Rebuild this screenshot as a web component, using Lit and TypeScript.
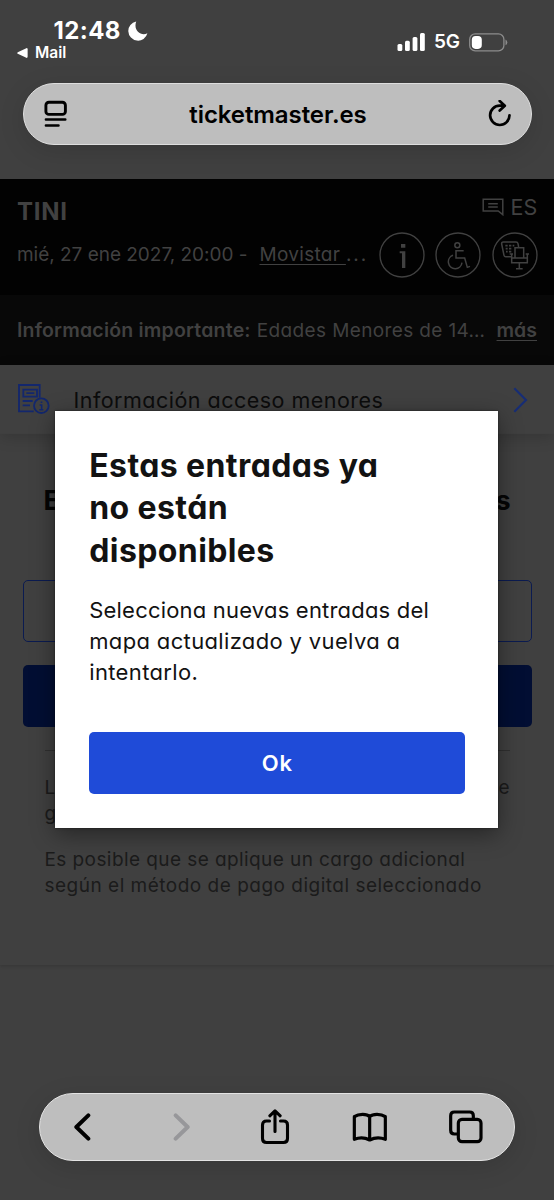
import { LitElement, html, css } from "lit";
import { customElement } from "lit/decorators.js";

@customElement("browser-top")
class BrowserTop extends LitElement {
  static styles = css`
    :host { display: block; height: 179px; box-sizing: border-box; background: #404040; color: #fff;
      font-family: Inter, "Liberation Sans", sans-serif; }
    .status { display: flex; justify-content: space-between; height: 83px; box-sizing: border-box; padding: 17px 46px 0 17px; }
    .left { display: flex; flex-direction: column; }
    .clock { display: flex; align-items: center; gap: 7px; padding-left: 36.500px; height: 28px; }
    .time { font-size: 24px; font-weight: 700; line-height: 28px; letter-spacing: 0.400px; }
    .back { display: flex; align-items: center; gap: 7px; height: 14px; padding-top: 1px; font-size: 15.500px; font-weight: 600; line-height: 14px; }
    .right { display: flex; align-items: center; height: 22px; padding-top: 14px; gap: 9px; }
    .net { font-size: 19px; font-weight: 600; letter-spacing: -0.1px; line-height: 22px; }
    .address { display: flex; align-items: center; justify-content: space-between; height: 62px; margin: 0 22.5px;
      box-sizing: border-box; padding: 0 18px 0 20px; border: 1px solid #dedede; border-radius: 31px;
      background: #bebebe; color: #000; box-shadow: 0 6px 26px rgba(0, 0, 0, 0.13); }
    .domain { font-size: 24px; font-weight: 600; letter-spacing: -0.08px; line-height: 30px; padding-top: 2px; }
    svg { display: block; flex: none; }
  `;
  render() {
    return html`
      <div class="status">
        <div class="left">
          <div class="clock">
            <span class="time">12:48</span>
            <svg width="20" height="20" viewBox="0 0 20 20"><path fill="#fff" d="M8.2.4A9.7 9.7 0 1 0 19.4 12.3C13 15.500 5 9.500 8.200.400z"/></svg>
          </div>
          <div class="back">
            <svg width="11" height="10" viewBox="0 0 11 10"><path fill="#fff" d="M.8 4.200 9.300.200Q10.600-.200 10.600 1.200V8.800Q10.600 10.200 9.300 9.800L.8 5.800Q-.4 5 .8 4.200z"/></svg>
            <span>Mail</span>
          </div>
        </div>
        <div class="right">
          <svg width="28" height="18" viewBox="0 0 28 18" fill="#fff">
            <rect x="0.500" y="11" width="4.800" height="7" rx="1.500"/><rect x="8" y="7.700" width="4.800" height="10.300" rx="1.500"/>
            <rect x="15.600" y="4" width="4.800" height="14" rx="1.500"/><rect x="23" y="0" width="4.800" height="18" rx="1.500"/>
          </svg>
          <span class="net">5G</span>
          <svg width="39" height="19" viewBox="0 0 39 19">
            <rect x="0.700" y="0.900" width="34.200" height="17" rx="5.500" fill="none" stroke="#8c8c8c" stroke-width="1.300"/>
            <rect x="2.800" y="2.900" width="10" height="13" rx="3.800" fill="#fff"/>
            <path d="M36.500 6.600Q38.300 7.600 38.300 9.400T36.500 12.300z" fill="#8c8c8c"/>
          </svg>
        </div>
      </div>
      <div class="address">
        <svg width="24" height="28" viewBox="0 0 24 28" fill="none" stroke="#000" stroke-linecap="round">
          <rect x="1.900" y="2.200" width="19.500" height="12.200" rx="3" stroke-width="2.900"/>
          <path d="M1.900 19.600H21.300M1.900 25.500H14.500" stroke-width="2.500"/>
        </svg>
        <span class="domain">ticketmaster.es</span>
        <svg width="24" height="28" viewBox="0 0 24 28" fill="none" stroke="#000" stroke-width="2.700" stroke-linecap="round" stroke-linejoin="round">
          <path d="M21.500 15.300A9.700 9.700 0 1 1 11.800 5.600H16M11.700 1 16.800 5.800 11.700 10.600"/>
        </svg>
      </div>`;
  }
}

@customElement("event-header")
class EventHeader extends LitElement {
  static styles = css`
    :host { display: block; color: #414141; font-family: Inter, "Liberation Sans", sans-serif; font-feature-settings: "cv11";
      font-size: 19px; font-weight: 400; }
    .event { height: 116px; box-sizing: border-box; padding: 16px 16.500px 0 17px; background: #020202; }
    .row { display: flex; align-items: center; justify-content: space-between; white-space: nowrap; }
    .first { height: 32px; }
    .title { font-size: 24px; font-weight: 700; letter-spacing: 0.7px; }
    .lang { display: flex; align-items: center; gap: 6px; font-size: 21.500px; letter-spacing: 0.2px; margin-top: -9px; }
    .second { height: 56px; }
    .date { letter-spacing: -0.02px; padding-bottom: 2px; }
    .place { margin-left: 12px; flex: 1; letter-spacing: 0.3px; padding-bottom: 2px; }
    .dots { letter-spacing: 2px; }
    .link { text-decoration: underline; text-underline-offset: 3px; white-space: pre; }
    .icons { display: flex; gap: 10.500px; }
    .notice { display: flex; align-items: center; height: 70px; box-sizing: border-box; padding: 0 17px; background: #080808; white-space: nowrap; }
    .strong { font-size: 19.500px; font-weight: 600; letter-spacing: 0.2px; }
    .body { margin-left: 6px; flex: 1; letter-spacing: 0.37px; }
    .more { font-size: 19.500px; font-weight: 600; text-decoration: underline; text-underline-offset: 3px; }
    svg { display: block; flex: none; }
  `;
  render() {
    return html`
      <div class="event">
        <div class="row first">
          <span class="title">TINI</span>
          <span class="lang">
            <svg width="22" height="18" viewBox="482.500 196.500 22 18" fill="none" stroke="#414141" stroke-width="1.500">
              <path d="M483.700 197.700H503.300V213.200L498.700 209.500H483.700zM488.700 202.300H498.300M488.700 205.600H498.300"/>
            </svg>
            <span>ES</span>
          </span>
        </div>
        <div class="row second">
          <span class="date">mié, 27 ene 2027, 20:00 -</span>
          <span class="place"><span class="link">Movistar </span><span class="dots">...</span></span>
          <span class="icons">
            <svg width="46" height="46" viewBox="305 170 138 138" fill="none" stroke="#414141">
              <circle cx="374" cy="239" r="66" stroke-width="4"/>
              <path d="M371 206h13v11h-13zM367 228h17v50h-10v-44h-7z" fill="#414141" stroke="none"/>
            </svg>
            <svg width="46" height="46" viewBox="474 170 138 138" fill="none" stroke="#414141" stroke-width="4.500">
              <circle cx="543" cy="239" r="66" stroke-width="4"/>
              <circle cx="541" cy="210" r="7.500"/>
              <path d="M560 226H537V248H563L571 276L579 273M528 240A20.500 20.500 0 1 0 555 262"/>
            </svg>
            <svg width="46" height="46" viewBox="644 170 138 138" fill="none" stroke="#414141" stroke-width="4.500">
              <circle cx="713" cy="239" r="66" stroke-width="4"/>
              <path d="M703 244H685Q681 244 680 240L673 206Q672 200 678 200H716Q721 200 722 205L724 215"/>
              <path d="M684 211h7M695 211h7M706 211h5M685 220h6M695 220h7M686 229h5M695 229h7" stroke-width="5"/>
              <path d="M713 247V217H739V247M703 236V262H750V236M697 236H707M745 236H755M703 248H750M726 262V280M716 280H736"/>
            </svg>
          </span>
        </div>
      </div>
      <div class="notice">
        <span class="strong">Información importante:</span>
        <span class="body">Edades Menores de 14…</span>
        <span class="more">más</span>
      </div>`;
  }
}

@customElement("checkout-page")
class CheckoutPage extends LitElement {
  static styles = css`
    :host { display: block; background: #404040; font-family: Inter, "Liberation Sans", sans-serif; font-feature-settings: "cv11"; }
    .access { display: flex; align-items: center; height: 69px; padding: 0 26.500px 0 18px; box-sizing: border-box;
      box-shadow: 0 4px 14px rgba(0, 0, 0, 0.16); color: #0c0c0c; }
    .label { flex: 1; margin-left: 23.500px; font-size: 21.500px; font-weight: 400; letter-spacing: 0.48px; white-space: nowrap; }
    .card { height: 531px; box-sizing: border-box; padding: 47px 22.500px 0; box-shadow: 0 2px 3px rgba(0, 0, 0, 0.13); }
    .ends { display: flex; justify-content: space-between; padding: 0 22px; }
    .heading { font-size: 27px; line-height: 40px; font-weight: 700; color: #050505; padding: 0 21px; }
    .btn { height: 62px; box-sizing: border-box; border-radius: 5px; }
    .outline { border: 1.500px solid #0b1b50; margin-top: 59px; }
    .solid { background: #020e33; margin-top: 23px; }
    .rule { height: 1px; background: #303030; margin: 23px 22px 24px; }
    .text { font-size: 19px; line-height: 25.500px; font-weight: 400; color: #1b1b1b; }
    .para { padding: 0 22px; margin-top: 21px; white-space: nowrap; letter-spacing: 0.42px; }
    .line { display: block; }
    .wide { letter-spacing: 0.5px; }
    svg { display: block; flex: none; }
  `;
  render() {
    return html`
      <div class="access">
        <svg width="32" height="32" viewBox="54 105 96 96" fill="none" stroke="#13276d" stroke-width="5.500">
          <path d="M101 187H57V108H119V146M70 122H111V143H70zM79 132.500H103M68 156H98M68 169H90"/>
          <circle cx="124" cy="170" r="22"/>
          <path d="M119 168H125V182M118 182H130M122 160H127" stroke-width="4.500"/>
        </svg>
        <span class="label">Información acceso menores</span>
        <svg width="15" height="26" viewBox="0 0 15 26" fill="none" stroke="#172d75" stroke-width="2.200"><path d="M1.300 1.300 13 13 1.300 24.700"/></svg>
      </div>
      <div class="card">
        <div class="ends heading"><span>E</span><span>s</span></div>
        <div class="btn outline"></div>
        <div class="btn solid"></div>
        <div class="rule"></div>
        <div class="ends text"><span>L</span><span>e</span></div>
        <div class="ends text"><span>g</span></div>
        <div class="text para">
          <span class="line">Es posible que se aplique un cargo adicional</span>
          <span class="line wide">según el método de pago digital seleccionado</span>
        </div>
      </div>`;
  }
}

@customElement("notice-dialog")
class NoticeDialog extends LitElement {
  static styles = css`
    :host { display: block; width: 443px; height: 417px; box-sizing: border-box; padding: 34px 34px 0; background: #fff; color: #121212;
      box-shadow: 0 6px 22px rgba(0, 0, 0, 0.42), 0 0 2px rgba(0, 0, 0, 0.5);
      font-family: Inter, "Liberation Sans", sans-serif; font-feature-settings: "cv11"; }
    .title { margin: 0; font-size: 32px; line-height: 42.500px; font-weight: 650; letter-spacing: 0.4px; white-space: nowrap; }
    .copy { margin: 23px 0 0; font-size: 22px; line-height: 31px; font-weight: 400; letter-spacing: 0.2px; white-space: nowrap; }
    .line { display: block; }
    .wide { letter-spacing: 0.35px; }
    .ok { display: block; width: 376px; height: 62px; margin-top: 43.500px; border: 0; border-radius: 5px; background: #1f4bd8; color: #fff;
      font: 600 22px/62px Inter, "Liberation Sans", sans-serif; letter-spacing: 0.8px; padding: 0; }
  `;
  render() {
    return html`
      <h1 class="title"><span class="line">Estas entradas ya</span><span class="line">no están</span><span class="line">disponibles</span></h1>
      <p class="copy"><span class="line">Selecciona nuevas entradas del</span><span class="line wide">mapa actualizado y vuelva a</span><span class="line wide">intentarlo.</span></p>
      <button class="ok">Ok</button>`;
  }
}

@customElement("browser-toolbar")
class BrowserToolbar extends LitElement {
  static styles = css`
    :host { display: flex; align-items: center; height: 68px; box-sizing: border-box; margin: 0 39px;
      padding: 0 0 0 34px; border: 1px solid #e4e4e4; border-radius: 34px; background: #bebebe; box-shadow: 0 6px 26px rgba(0, 0, 0, 0.13); }
    svg { display: block; flex: none; }
    .forward { margin-left: 82px; }
    .share { margin-left: 70px; }
    .book { margin-left: 62px; }
    .tabs { margin-left: 61px; }
  `;
  render() {
    return html`
      <svg width="17" height="28" viewBox="222 128 51 84" fill="none" stroke="#000" stroke-width="12" stroke-linecap="round" stroke-linejoin="round"><path d="M265 135 229 170 265 205"/></svg>
      <svg class="forward" width="17" height="28" viewBox="520 128 51 84" fill="none" stroke="#97979a" stroke-width="12" stroke-linecap="round" stroke-linejoin="round"><path d="M528 135 564 170 528 205"/></svg>
      <svg class="share" width="30" height="38" viewBox="0 0 30 38" fill="none" stroke="#000" stroke-width="3.100" stroke-linecap="round" stroke-linejoin="round">
        <path d="M9.500 13H6.500Q2.500 13 2.500 17V30.500Q2.500 34.500 6.500 34.500H23.500Q27.500 34.500 27.500 30.500V17Q27.500 13 23.500 13H20.500M15 23.500V3M9.800 7.800 15 2.800 20.200 7.800"/>
      </svg>
      <svg class="book" width="36" height="30" viewBox="226 124 108 90" fill="none" stroke="#000" stroke-width="9.500" stroke-linecap="round" stroke-linejoin="round">
        <path d="M279 138Q273 131 258 131Q243 131 233 138V206Q257 196 279 208Q302 196 326 206V138Q316 131 301 131Q286 131 279 138V208"/>
      </svg>
      <svg class="tabs" width="34" height="34" viewBox="515 119 102 102" fill="none" stroke="#000" stroke-width="9.500" stroke-linejoin="round">
        <path d="M540 191H531Q520 191 520 180V136Q520 125 531 125H577Q588 125 588 136V146"/>
        <rect x="543" y="147" width="68" height="67" rx="11"/>
      </svg>`;
  }
}

@customElement("app-root")
class AppRoot extends LitElement {
  static styles = css`
    :host { display: flex; flex-direction: column; position: relative; width: 554px; height: 1200px; overflow: hidden; background: #404040; }
    .toolbar { margin-top: auto; margin-bottom: 39px; }
    .dialog { position: absolute; left: 55.250px; top: 410.500px; }
  `;
  render() {
    return html`
      <browser-top></browser-top>
      <event-header></event-header>
      <checkout-page></checkout-page>
      <browser-toolbar class="toolbar"></browser-toolbar>
      <notice-dialog class="dialog"></notice-dialog>`;
  }
}
